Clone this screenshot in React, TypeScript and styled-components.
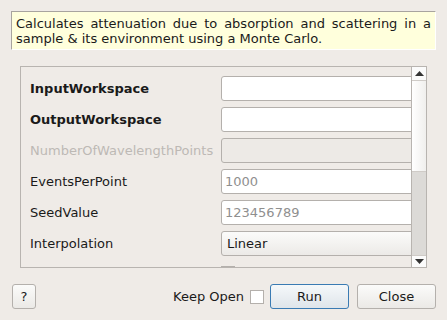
import React from "react";
import styled, { createGlobalStyle } from "styled-components";

const Global = createGlobalStyle`
  html, body { margin: 0; padding: 0; background: #efebe7; }
  body { font-family: "DejaVu Sans", sans-serif; font-size: 13px; color: #1a1a1a; }
  * { box-sizing: border-box; }
`;

const Dialog = styled.div`
  width: 447px;
  height: 320px;
  display: flex;
  flex-direction: column;
  overflow: hidden;
`;

const Description = styled.div`
  margin: 11px 11px 0 11px;
  height: 39px;
  background: #ffffdc;
  border-top: 1px solid #a8a49f;
  border-left: 1px solid #a8a49f;
  border-right: 1px solid #ffffff;
  border-bottom: 1px solid #ffffff;
  padding: 4px 4px 0 4px;
  line-height: 15px;
  text-align: justify;
  color: #1a1a1a;
`;

const ScrollFrame = styled.div`
  margin: 16px 20px 0 20px;
  height: 202px;
  border: 1px solid #b8b4b0;
  display: flex;
  overflow: hidden;
`;

const Content = styled.div`
  flex: 1;
  overflow: hidden;
  padding: 9px 0 0 9px;
  display: grid;
  grid-template-columns: 191px 200px;
  grid-auto-rows: 25px;
  row-gap: 6px;
  align-items: center;
`;

const Label = styled.div<{ $bold?: boolean; $disabled?: boolean }>`
  font-weight: ${(p) => (p.$bold ? "bold" : "normal")};
  color: ${(p) => (p.$disabled ? "#bdb9b5" : "#1a1a1a")};
  white-space: nowrap;
`;

const Field = styled.div<{ $disabled?: boolean }>`
  height: 25px;
  border: 1px solid #b4b0ac;
  border-radius: 3px;
  background: ${(p) => (p.$disabled ? "#edeae6" : "#ffffff")};
  padding: 0 3px;
  display: flex;
  align-items: center;
  color: #8f8f8f;
`;

const Combo = styled.div`
  height: 25px;
  border: 1px solid #b4b0ac;
  border-radius: 3px;
  background: linear-gradient(#fbfbfa, #eceae7);
  padding: 0 5px;
  display: flex;
  align-items: center;
  color: #1a1a1a;
`;

const SmallCheck = styled.div`
  width: 14px;
  height: 14px;
  border: 1px solid #b4b0ac;
  background: #ffffff;
  align-self: start;
  margin-top: 4px;
`;

const ScrollBar = styled.div`
  width: 15px;
  border-left: 1px solid #b8b4b0;
  display: flex;
  flex-direction: column;
  background: #dcdad7;
`;

const ArrowButton = styled.div<{ $top?: boolean }>`
  height: ${(p) => (p.$top ? "14px" : "12px")};
  background: #fbfbfb;
  display: flex;
  align-items: center;
  justify-content: center;
  border-bottom: ${(p) => (p.$top ? "1px solid #cfcbc7" : "none")};
  border-top: ${(p) => (p.$top ? "none" : "1px solid #cfcbc7")};
`;

const Handle = styled.div`
  height: 91px;
  background: linear-gradient(to right, #ffffff, #f0efed);
  border-bottom: 1px solid #cfcbc7;
`;

const Track = styled.div`
  flex: 1;
`;

const Footer = styled.div`
  margin: 16px 11px 0 12px;
  height: 25px;
  display: flex;
  align-items: center;
`;

const Button = styled.button<{ $primary?: boolean; $w: number }>`
  width: ${(p) => p.$w}px;
  height: 25px;
  font-family: "DejaVu Sans", sans-serif;
  font-size: 13px;
  color: #1a1a1a;
  border: 1px solid ${(p) => (p.$primary ? "#3a7bb3" : "#b4b0ac")};
  border-radius: 3px;
  background: ${(p) =>
    p.$primary ? "linear-gradient(#f5f8fa, #dfe5ea)" : "linear-gradient(#fbfbfa, #ebe9e6)"};
  padding: 0;
  margin-left: ${(p) => (p.$primary ? "0" : "8px")};
  &:first-child { margin-left: 0; }
`;

const Spacer = styled.div`
  flex: 1;
`;

const KeepLabel = styled.span`
  margin-right: 6px;
`;

const CheckBox = styled.div`
  width: 14px;
  height: 14px;
  border: 1px solid #b4b0ac;
  background: #ffffff;
  margin-right: 6px;
`;

const Up = () => (
  <svg width="9" height="5" viewBox="0 0 9 5">
    <polygon points="0,5 9,5 4.5,0" fill="#333" />
  </svg>
);
const Down = () => (
  <svg width="9" height="5" viewBox="0 0 9 5">
    <polygon points="0,0 9,0 4.5,5" fill="#333" />
  </svg>
);

export default function App() {
  return (
    <Dialog>
      <Global />
      <Description>
        Calculates attenuation due to absorption and scattering in a sample &amp; its environment using a Monte Carlo.
      </Description>
      <ScrollFrame>
        <Content>
          <Label $bold>InputWorkspace</Label>
          <Field />
          <Label $bold>OutputWorkspace</Label>
          <Field />
          <Label $disabled>NumberOfWavelengthPoints</Label>
          <Field $disabled />
          <Label>EventsPerPoint</Label>
          <Field>1000</Field>
          <Label>SeedValue</Label>
          <Field>123456789</Field>
          <Label>Interpolation</Label>
          <Combo>Linear</Combo>
          <Label />
          <SmallCheck />
        </Content>
        <ScrollBar>
          <ArrowButton $top>
            <Up />
          </ArrowButton>
          <Handle />
          <Track />
          <ArrowButton>
            <Down />
          </ArrowButton>
        </ScrollBar>
      </ScrollFrame>
      <Footer>
        <Button $w={24}>?</Button>
        <Spacer />
        <KeepLabel>Keep Open</KeepLabel>
        <CheckBox />
        <Button $primary $w={79}>Run</Button>
        <Button $w={79}>Close</Button>
      </Footer>
    </Dialog>
  );
}
